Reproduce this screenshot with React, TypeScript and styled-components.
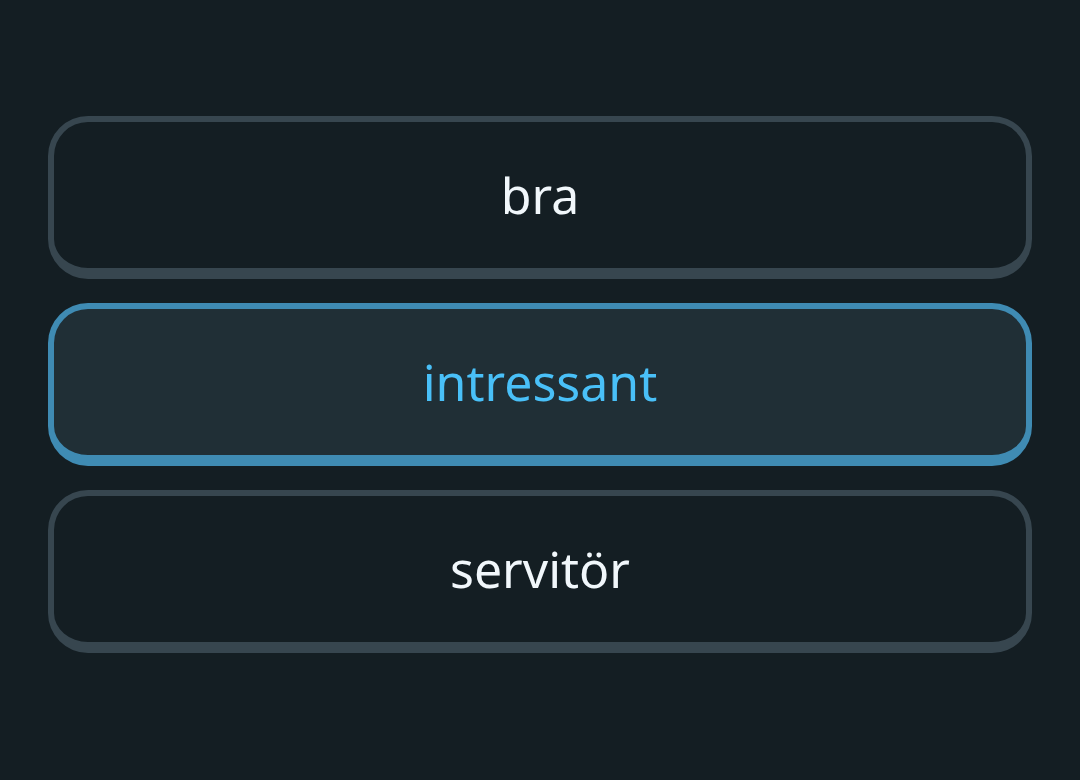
import styled, { createGlobalStyle } from 'styled-components';

const GlobalStyle = createGlobalStyle`
  html, body {
    margin: 0;
    padding: 0;
    background: #141e23;
  }
  body {
    font-family: 'Noto Sans', 'Open Sans', sans-serif;
  }
`;

const Page = styled.div`
  width: 1080px;
  height: 780px;
  box-sizing: border-box;
  padding: 116px 48px 0;
  background: #141e23;
`;

const OptionList = styled.div`
  display: flex;
  flex-direction: column;
  gap: 24px;
`;

const Option = styled.button<{ $selected?: boolean }>`
  height: 163px;
  width: 100%;
  box-sizing: border-box;
  display: flex;
  align-items: center;
  justify-content: center;
  border-style: solid;
  border-width: 6px 6px 11px;
  border-color: ${(p) => (p.$selected ? '#3f8bb3' : '#37464f')};
  border-radius: 40px;
  background: ${(p) => (p.$selected ? '#202f36' : '#141e23')};
  color: ${(p) => (p.$selected ? '#49c0f8' : '#f1f7fb')};
  font-family: 'Noto Sans', 'Open Sans', sans-serif;
  font-size: 50px;
  font-weight: 400;
  padding: 0;
  cursor: pointer;
`;

const options = [
  { label: 'bra', selected: false },
  { label: 'intressant', selected: true },
  { label: 'servitör', selected: false },
];

export default function App() {
  return (
    <Page>
      <GlobalStyle />
      <OptionList>
        {options.map((o) => (
          <Option key={o.label} $selected={o.selected}>
            {o.label}
          </Option>
        ))}
      </OptionList>
    </Page>
  );
}
